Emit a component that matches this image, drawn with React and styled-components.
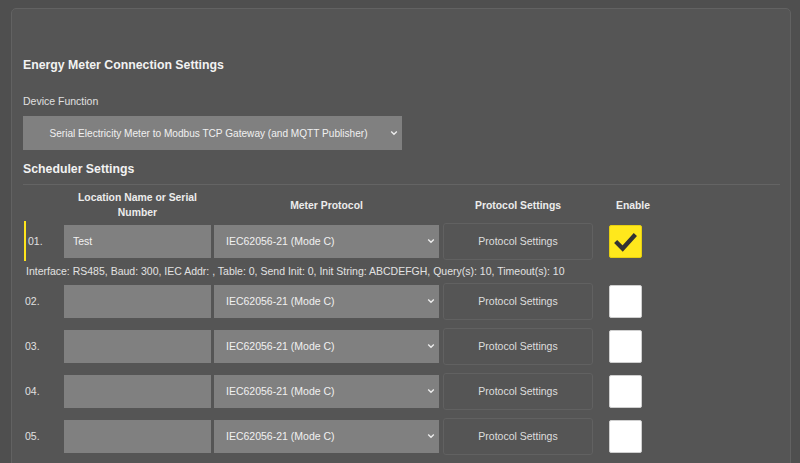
import styled, { createGlobalStyle } from "styled-components";

const GlobalStyle = createGlobalStyle`
  html, body {
    margin: 0;
    background: #4f4f4f;
  }
  body {
    padding: 8px 9px 0 11px;
    font-family: "Liberation Sans", Arial, sans-serif;
    color: #e6e6e6;
    overflow: hidden;
  }
`;

const Card = styled.div`
  border: 1px solid #626262;
  border-radius: 5px;
  background: #555555;
  padding: 49px 10px 40px 11px;
  height: 600px;
`;

const Title = styled.h2`
  margin: 0;
  font-size: 12.3px;
  line-height: 15px;
  font-weight: bold;
  color: #f2f2f2;
`;

const Label = styled.div`
  margin-top: 21px;
  font-size: 10.5px;
  line-height: 14px;
  color: #e0e0e0;
`;

const SelectBox = styled.div`
  box-sizing: border-box;
  display: flex;
  align-items: center;
  width: ${(p) => p.$width}px;
  height: ${(p) => p.$height}px;
  margin-top: ${(p) => p.$top || 0}px;
  margin-right: ${(p) => p.$right || 0}px;
  padding: 0 4px 0 ${(p) => (p.$center ? 4 : 12)}px;
  background: #808080;
  color: #f0f0f0;
  font-size: ${(p) => (p.$center ? 10.1 : 10.5)}px;

  span {
    flex: 1;
    text-align: ${(p) => (p.$center ? "center" : "left")};
    white-space: nowrap;
  }
`;

const SubTitle = styled(Title)`
  margin-top: 12px;
  padding-bottom: 7px;
  border-bottom: 1px solid #646464;
`;

const Table = styled.div`
  padding-top: 5px;
  padding-left: 1px;
`;

const Row = styled.div`
  display: flex;
  align-items: center;
  height: ${(p) => (p.$header ? "auto" : "40px")};
  margin-bottom: ${(p) => (p.$header ? 1 : p.$info ? 0 : 5)}px;
`;

const NumCell = styled.div`
  box-sizing: border-box;
  align-self: stretch;
  display: flex;
  align-items: center;
  width: 40px;
  padding-left: ${(p) => (p.$active ? 2 : 1)}px;
  border-left: ${(p) => (p.$active ? "2px solid #ffe51c" : "none")};
  font-size: 10.5px;
  color: #e0e0e0;
`;

const HeadCell = styled.div`
  width: ${(p) => p.$width}px;
  margin-right: ${(p) => p.$right || 0}px;
  text-align: center;
  font-size: 10.4px;
  line-height: 15px;
  font-weight: bold;
  color: #ececec;
`;

const TextInput = styled.input`
  box-sizing: border-box;
  width: 147px;
  height: 33px;
  margin: 0 3px 0 0;
  padding: 0 9px;
  border: none;
  outline: none;
  background: #808080;
  color: #f2f2f2;
  font-family: inherit;
  font-size: 10.5px;
`;

const SettingsButton = styled.button`
  box-sizing: border-box;
  width: 150px;
  height: 37px;
  margin-right: 16px;
  border: 1px solid #616161;
  border-radius: 3px;
  background: #555555;
  color: #dedede;
  font-family: inherit;
  font-size: 10.5px;
`;

const CheckBox = styled.div`
  box-sizing: border-box;
  width: 33px;
  height: 33px;
  border-radius: 2px;
  border: 1px solid ${(p) => (p.$checked ? "#e6cf10" : "#cfcfcf")};
  background: ${(p) => (p.$checked ? "#ffe81c" : "#ffffff")};
  display: flex;
  align-items: center;
  justify-content: center;
`;

const Info = styled.div`
  padding-left: 2px;
  font-size: 10.5px;
  line-height: 20px;
  color: #e2e2e2;
  white-space: nowrap;
`;

const Chevron = () => (
  <svg width="8" height="6" viewBox="0 0 8 6">
    <polyline points="1.2,1.5 4,4.3 6.8,1.5" fill="none" stroke="#eeeeee" strokeWidth="1.3" />
  </svg>
);

const Check = () => (
  <svg width="33" height="33" viewBox="0 0 33 33">
    <polyline points="6,16.5 13.5,24 27,9" fill="none" stroke="#333333" strokeWidth="4.6" />
  </svg>
);

const meters = [
  { id: "01.", name: "Test", enabled: true, info: "Interface: RS485, Baud: 300, IEC Addr: , Table: 0, Send Init: 0, Init String: ABCDEFGH, Query(s): 10, Timeout(s): 10" },
  { id: "02.", name: "", enabled: false },
  { id: "03.", name: "", enabled: false },
  { id: "04.", name: "", enabled: false },
  { id: "05.", name: "", enabled: false },
];

const App = () => {
  return (
    <>
      <GlobalStyle />
      <Card>
        <Title>Energy Meter Connection Settings</Title>
        <Label>Device Function</Label>
        <SelectBox $width={379} $height={34} $top={8} $center>
          <span>Serial Electricity Meter to Modbus TCP Gateway (and MQTT Publisher)</span>
          <Chevron />
        </SelectBox>

        <SubTitle>Scheduler Settings</SubTitle>

        <Table>
          <Row $header>
            <NumCell />
            <HeadCell $width={147} $right={3}>Location Name or Serial Number</HeadCell>
            <HeadCell $width={225} $right={4}>Meter Protocol</HeadCell>
            <HeadCell $width={150} $right={16}>Protocol Settings</HeadCell>
            <HeadCell $width={48}>Enable</HeadCell>
          </Row>

          {meters.map((m) => (
            <div key={m.id}>
              <Row $info={!!m.info}>
                <NumCell $active={m.enabled}>{m.id}</NumCell>
                <TextInput defaultValue={m.name} />
                <SelectBox $width={225} $height={33} $right={4}>
                  <span>IEC62056-21 (Mode C)</span>
                  <Chevron />
                </SelectBox>
                <SettingsButton>Protocol Settings</SettingsButton>
                <CheckBox $checked={m.enabled}>{m.enabled && <Check />}</CheckBox>
              </Row>
              {m.info && <Info>{m.info}</Info>}
            </div>
          ))}
        </Table>
      </Card>
    </>
  );
};

export default App;
